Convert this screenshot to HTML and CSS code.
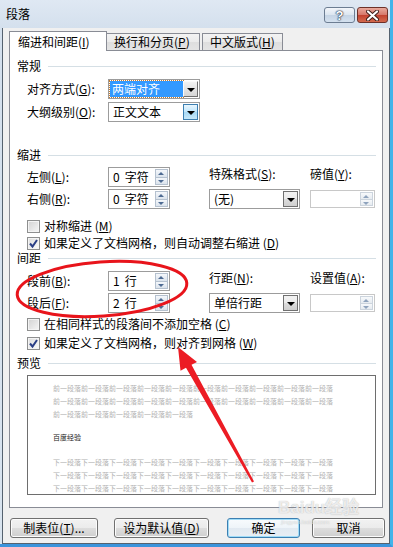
FILE: index.html
```html
<!DOCTYPE html>
<html lang="zh-CN">
<head>
  <meta charset="UTF-8">
  <title>段落</title>
  <link rel="stylesheet" href="styles.css">
</head>
<body>
  <div class="window">
    <div class="titlebar">
      <span class="title">段落</span>
      <div class="caption-btns">
        <span class="cap-btn help">?</span>
        <span class="cap-btn close">
          <svg width="13" height="11" viewBox="0 0 13 11">
            <path d="M2 1.5 L11 9.5 M11 1.5 L2 9.5" stroke="#3a1a16" stroke-width="4" stroke-linecap="round"/>
            <path d="M2 1.5 L11 9.5 M11 1.5 L2 9.5" stroke="#fff" stroke-width="2.2" stroke-linecap="round"/>
          </svg>
        </span>
      </div>
    </div>

    <div class="client">
      <div class="tabs">
        <div class="tab active">缩进和间距(<u>I</u>)</div>
        <div class="tab t2">换行和分页(<u>P</u>)</div>
        <div class="tab t3">中文版式(<u>H</u>)</div>
      </div>

      <div class="panel">
        <div class="group-head">常规</div>
        <div class="row first">
          <span class="label">对齐方式(<u>G</u>):</span>
          <div class="select wide">
            <span class="sel-text"><span class="hl">两端对齐</span></span>
            <span class="drop raised"></span>
          </div>
        </div>
        <div class="row">
          <span class="label">大纲级别(<u>O</u>):</span>
          <div class="select wide">
            <span class="sel-text">正文文本</span>
            <span class="drop hot"></span>
          </div>
        </div>

        <div class="group-head g-indent">缩进</div>
        <div class="grid">
          <span class="label">左侧(<u>L</u>):</span>
          <div class="spin"><span class="spin-val"><span class="num">0</span>字符</span><span class="spin-btns"><i class="sb up"></i><i class="sb down"></i></span></div>
          <span class="label top">特殊格式(<u>S</u>):</span>
          <span class="label top">磅值(<u>Y</u>):</span>

          <span class="label">右侧(<u>R</u>):</span>
          <div class="spin"><span class="spin-val"><span class="num">0</span>字符</span><span class="spin-btns"><i class="sb up"></i><i class="sb down"></i></span></div>
          <div class="select mid">
            <span class="sel-text">(无)</span>
            <span class="drop flat"></span>
          </div>
          <div class="spin disabled"><span class="spin-val"></span><span class="spin-btns"><i class="sb up"></i><i class="sb down"></i></span></div>
        </div>

        <div class="check c1"><span class="box"></span><span>对称缩进 (<u>M</u>)</span></div>
        <div class="check c2"><span class="box checked"><svg width="11" height="11" viewBox="0 0 11 11"><path d="M2 5.5 L4.5 8.5 L9 2" fill="none" stroke="#2b3f86" stroke-width="2"/></svg></span><span>如果定义了文档网格，则自动调整右缩进 (<u>D</u>)</span></div>

        <div class="group-head g-space">间距</div>
        <div class="grid g2">
          <span class="label">段前(<u>B</u>):</span>
          <div class="spin"><span class="spin-val"><span class="num">1</span>行</span><span class="spin-btns"><i class="sb up"></i><i class="sb down"></i></span></div>
          <span class="label top">行距(<u>N</u>):</span>
          <span class="label top">设置值(<u>A</u>):</span>

          <span class="label">段后(<u>F</u>):</span>
          <div class="spin"><span class="spin-val"><span class="num">2</span>行</span><span class="spin-btns"><i class="sb up"></i><i class="sb down"></i></span></div>
          <div class="select mid">
            <span class="sel-text">单倍行距</span>
            <span class="drop flat"></span>
          </div>
          <div class="spin disabled"><span class="spin-val"></span><span class="spin-btns"><i class="sb up"></i><i class="sb down"></i></span></div>
        </div>

        <div class="check c3"><span class="box"></span><span>在相同样式的段落间不添加空格 (<u>C</u>)</span></div>
        <div class="check c4"><span class="box checked"><svg width="11" height="11" viewBox="0 0 11 11"><path d="M2 5.5 L4.5 8.5 L9 2" fill="none" stroke="#2b3f86" stroke-width="2"/></svg></span><span>如果定义了文档网格，则对齐到网格 (<u>W</u>)</span></div>

        <div class="group-head g-preview">预览</div>
        <div class="preview">
          <div class="pv-prev">
            <p>前一段落前一段落前一段落前一段落前一段落前一段落前一段落前一段落前一段落前一段落</p>
            <p>前一段落前一段落前一段落前一段落前一段落前一段落前一段落前一段落前一段落前一段落</p>
            <p>前一段落前一段落前一段落前一段落前一段落</p>
          </div>
          <p class="pv-cur">百度经验</p>
          <div class="pv-next">
            <p>下一段落下一段落下一段落下一段落下一段落下一段落下一段落下一段落下一段落下一段落</p>
            <p>下一段落下一段落下一段落下一段落下一段落下一段落下一段落下一段落下一段落下一段落</p>
            <p>下一段落下一段落下一段落下一段落下一段落下一段落下一段落下一段落下一段落下一段落</p>
          </div>
        </div>
      </div>

      <div class="btn-row">
        <button class="btn b-tabs">制表位(<u>T</u>)...</button>
        <button class="btn b-default">设为默认值(<u>D</u>)</button>
        <button class="btn b-ok">确定</button>
        <button class="btn b-cancel">取消</button>
      </div>
    </div>

    <div class="watermark">
      <span class="wm-logo">Bai<b>du</b>经验</span>
      <span class="wm-url">jingyan.baidu.com</span>
    </div>

    <svg class="marks" width="393" height="547" viewBox="0 0 393 547">
      <ellipse cx="102" cy="289" rx="85" ry="27" transform="rotate(-4 102 289)" fill="none" stroke="#e8141b" stroke-width="3"/>
      <polygon points="178,347 197,362 191.5,364.8 254,481.5 252,482.5 186,367.8 180.5,370.7" fill="#ec1c24"/>
    </svg>
  </div>
</body>
</html>
```

FILE: styles.css
```css
* {
  box-sizing: border-box;
}

body {
  margin: 0;
  font-family: "Noto Sans CJK SC", "Noto Sans", sans-serif;
  font-size: 12px;
  color: #000;
}

u {
  text-decoration: underline;
  text-underline-offset: 1px;
}

.window {
  position: relative;
  width: 393px;
  height: 547px;
  background: linear-gradient(#dfe8f3, #d4e0ed 28px, #d9e4ef);
  border-right: 3px solid #41b4e9;
  border-bottom: 3px solid #3b94dc;
  overflow: hidden;
}

/* title bar */
.titlebar {
  height: 28px;
  display: flex;
  justify-content: space-between;
  align-items: flex-start;
}

.title {
  margin: 6px 0 0 6px;
  line-height: 16px;
}

.caption-btns {
  display: flex;
  gap: 2px;
  margin: 7px 2px 0 0;
}

.cap-btn {
  width: 31px;
  height: 16px;
  border-radius: 3px;
  display: flex;
  align-items: center;
  justify-content: center;
}

.help {
  border: 1px solid #6c7d92;
  background: linear-gradient(#f3f6fa, #dbe5f0 50%, #c5d4e5 51%, #d4e1ef);
  color: #fff;
  font-family: "Liberation Sans", sans-serif;
  font-weight: bold;
  font-size: 13px;
  text-shadow: 0 0 1px #1d2d45, 0 0 1px #1d2d45, 0 0 2px #1d2d45;
}

.close {
  border: 1px solid #6d3129;
  background: linear-gradient(#e9a99c, #d6776a 50%, #c2412f 51%, #d36a4e);
}

/* client area */
.client {
  margin-left: 2px;
  width: 388px;
  height: 516px;
  border: 1px solid #55626f;
  border-top: none;
  background: #f0f0f0;
}

.tabs {
  height: 22px;
  padding-left: 6px;
  display: flex;
  align-items: flex-end;
}

.tab {
  position: relative;
  height: 17px;
  padding-left: 7px;
  border: 1px solid #898c95;
  border-bottom: none;
  background: linear-gradient(#f3f3f3, #ebebeb 50%, #dedede 51%, #e4e4e4);
  line-height: 15px;
  white-space: nowrap;
}

.tab.active {
  z-index: 1;
  width: 98px;
  height: 20px;
  margin-bottom: -1px;
  padding-left: 8px;
  background: #fff;
  line-height: 19px;
}

.tab.t2 {
  width: 94px;
  margin-left: -1px;
}

.tab.t3 {
  width: 81px;
  margin-left: 2px;
}

/* tab page */
.panel {
  margin-left: 6px;
  width: 374px;
  height: 458px;
  padding-top: 8px;
  border: 1px solid #898c95;
  background: #fff;
}

.group-head {
  display: flex;
  align-items: center;
  height: 14px;
  padding-left: 7px;
  line-height: 14px;
}

.group-head::after {
  content: "";
  flex: 1;
  height: 1px;
  margin: 0 6px 0 7px;
  background: #d5dfe5;
}

.g-indent { margin-top: 26px; }
.g-space { margin-top: 1px; }
.g-preview { margin-top: 6px; }

.row {
  display: flex;
  align-items: center;
  height: 20px;
  margin-top: 3px;
  padding-left: 17px;
}

.row.first {
  margin-top: 6px;
}

.label {
  width: 81px;
  line-height: 20px;
  white-space: nowrap;
}

.label.top {
  align-self: start;
  line-height: 14px;
}

.grid {
  display: grid;
  grid-template-columns: 81px 101px 101px 65px;
  grid-template-rows: 20px 20px;
  row-gap: 2px;
  margin-top: 5px;
  padding-left: 17px;
}

.grid.g2 {
  margin-top: 6px;
}

/* combo boxes */
.select {
  display: flex;
  height: 20px;
  border: 1px solid #9c9c9c;
  background: #fff;
}

.select.wide { width: 92px; }
.select.mid { width: 91px; }

.sel-text {
  flex: 1;
  padding-left: 4px;
  line-height: 18px;
  white-space: nowrap;
}

.hl {
  display: block;
  height: 16px;
  margin: 1px 0 0 -3px;
  padding-left: 2px;
  background: #3399ff;
  color: #fff;
  line-height: 16px;
  outline: 1px dotted #c87a2a;
}

.drop {
  position: relative;
  width: 15px;
  margin: 1px 1px 1px 0;
}

.drop::after {
  content: "";
  position: absolute;
  left: 3px;
  top: 6px;
  border-left: 4px solid transparent;
  border-right: 4px solid transparent;
  border-top: 4px solid #000;
}

.drop.raised {
  border: 1px solid;
  border-color: #fafafa #707070 #707070 #fafafa;
  background: linear-gradient(#f2f2f2, #d6d6d6);
}

.drop.hot {
  border: 1px solid #3c7fb1;
  background: linear-gradient(#eaf6fd, #bee6fd 50%, #a7d9f5 51%, #c6e8fa);
}

.drop.flat {
  border: 1px solid #707070;
  background: linear-gradient(#f2f2f2, #ebebeb 50%, #dddddd 51%, #cfcfcf);
}

/* spin boxes */
.spin {
  display: flex;
  width: 62px;
  height: 20px;
  border: 1px solid #9c9c9c;
  background: #fff;
}

.spin.disabled {
  width: 65px;
  height: 18px;
  margin-top: 1px;
  border-color: #c8c8c8;
}

.spin-val {
  flex: 1;
  padding-left: 4px;
  line-height: 18px;
  white-space: nowrap;
}

.num {
  margin-right: 5px;
}

.spin-btns {
  display: flex;
  flex-direction: column;
  width: 13px;
  margin: 1px 1px 1px 0;
}

.sb {
  position: relative;
  flex: 1;
  border: 1px solid #b5c1cf;
  background: linear-gradient(#f4f7fb, #dbe3ec);
}

.sb + .sb {
  margin-top: -1px;
}

.sb::after {
  content: "";
  position: absolute;
  left: 2px;
  top: 2px;
  border-left: 3.5px solid transparent;
  border-right: 3.5px solid transparent;
}

.sb.up::after { border-bottom: 3px solid #4d6a92; }
.sb.down::after { border-top: 3px solid #4d6a92; }

.disabled .sb {
  border-color: #ccd4dd;
  background: linear-gradient(#f7f9fb, #e6ebf0);
}

.disabled .sb.up::after { border-bottom-color: #8fa3bd; }
.disabled .sb.down::after { border-top-color: #8fa3bd; }

/* check boxes */
.check {
  display: flex;
  align-items: center;
  gap: 4px;
  height: 14px;
  padding-left: 17px;
  line-height: 14px;
  white-space: nowrap;
}

.c1 { margin-top: 10px; }
.c2 { margin-top: 3px; }
.c3 { margin-top: 4px; }
.c4 { margin-top: 5px; }

.box {
  display: flex;
  align-items: center;
  justify-content: center;
  width: 13px;
  height: 13px;
  border: 1px solid #8e8f8f;
  background: linear-gradient(135deg, #d2d2d2, #f6f6f6);
  box-shadow: inset 0 0 0 1px #f4f4f4;
}

.box.checked {
  background: linear-gradient(135deg, #dcdcdc, #fbfbfb);
}

/* preview */
.preview {
  width: 349px;
  height: 120px;
  margin: 5px 0 0 17px;
  padding: 6px 0 0 25px;
  border: 1px solid #6e6e6e;
  background: #fff;
  overflow: hidden;
  font-size: 7px;
}

.preview p {
  margin: 0;
  height: 13px;
  line-height: 13px;
  white-space: nowrap;
}

.pv-prev p,
.pv-next p {
  color: #b2b2b2;
}

.preview .pv-cur {
  margin-top: 10px;
  color: #222;
}

.pv-next {
  margin-top: 12px;
}

/* buttons */
.btn-row {
  display: flex;
  margin-top: 10px;
  padding-left: 7px;
}

.btn {
  height: 20px;
  padding: 0;
  border: 1px solid #707070;
  border-radius: 3px;
  background: linear-gradient(#f2f2f2, #ebebeb 50%, #dddddd 51%, #cfcfcf);
  box-shadow: inset 0 0 0 1px #fcfcfc;
  font-family: inherit;
  font-size: 12px;
  line-height: 18px;
  color: #000;
}

.b-tabs { width: 88px; }
.b-default { width: 95px; margin-left: 16px; }
.b-ok {
  width: 73px;
  margin-left: 18px;
  border-color: #3c7fb1;
  background: linear-gradient(#f8fbfd, #eef4f9 50%, #e1e9f1 51%, #e8eef4);
  box-shadow: inset 0 0 0 1px #9fdcf8;
}
.b-cancel { width: 73px; margin-left: 12px; }

/* overlays */
.watermark {
  position: absolute;
  left: 278px;
  top: 498px;
  display: flex;
  flex-direction: column;
  align-items: flex-start;
  pointer-events: none;
}

.wm-logo {
  font-family: "Liberation Sans", sans-serif;
  font-size: 17px;
  font-weight: bold;
  line-height: 20px;
  color: rgba(255, 255, 255, 0.75);
  text-shadow: 0 0 1px rgba(120, 120, 120, 0.6);
}

.wm-logo b {
  font-weight: bold;
}

.wm-url {
  margin: 0 0 0 3px;
  font-family: "Liberation Sans", sans-serif;
  font-size: 6px;
  line-height: 8px;
  color: rgba(255, 255, 255, 0.7);
  text-shadow: 0 0 1px rgba(120, 120, 120, 0.5);
}

.marks {
  position: absolute;
  left: 0;
  top: 0;
  pointer-events: none;
}
```
